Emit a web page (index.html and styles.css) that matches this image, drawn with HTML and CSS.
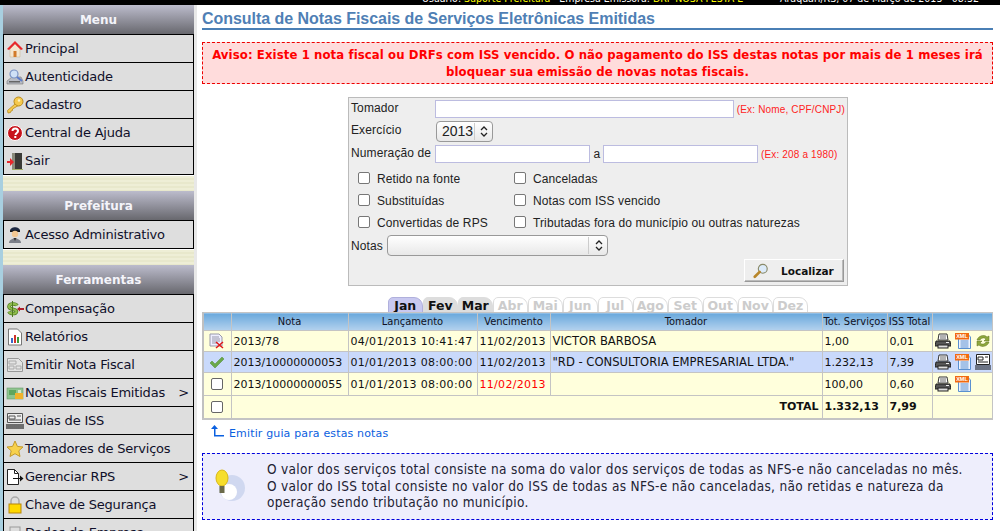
FILE: index.html
```html
<!DOCTYPE html>
<html lang="pt-BR">
<head>
<meta charset="utf-8">
<title>Consulta de Notas Fiscais</title>
<link rel="stylesheet" href="styles.css">
</head>
<body>
<header class="topbar">
  <span class="top-user">Usuário: <b>Suporte Prefeitura</b> &nbsp; Empresa Emissora: <b>DRF NOSA FESTA E</b></span>
  <span class="top-date">Araquari/RS, 07 de Março de 2013 - 08:32</span>
</header>
<div class="page">
<aside class="sidebar">
  <h2 class="side-head">Menu</h2>
  <ul class="side-list">
    <li><svg class="mi" viewBox="0 0 18 18"><path d="M4 9l5-5 5 5v8H4z" fill="#f4e6d0" stroke="#c9b088" stroke-width=".5"/><path d="M1 9 9 1l8 8-2 1-6-6-6 6z" fill="#e8282c"/><rect x="7.5" y="11" width="3" height="6" fill="#d27a2a"/></svg>Principal</li>
    <li><svg class="mi" viewBox="0 0 18 18"><path d="M1 13l5-4h9l2 4v3H1z" fill="#b9bcc4" stroke="#777" stroke-width=".6"/><rect x="3" y="13" width="11" height="1.5" fill="#666"/><circle cx="8" cy="6" r="4" fill="#cfe0f6" stroke="#7b93c4" stroke-width="1.2"/><path d="M11 9l5 4" stroke="#5d7cc8" stroke-width="2"/></svg>Autenticidade</li>
    <li><svg class="mi" viewBox="0 0 18 18"><circle cx="12.5" cy="5.5" r="4.5" fill="#f5c94e" stroke="#b98a1c"/><path d="M9 8 1.500 14.500l.5 2.500 2.500-.5.500-1.500 1.500-.5 0-1.500 5-3z" fill="#f5c94e" stroke="#b98a1c" stroke-width=".8"/><circle cx="13" cy="4.500" r="1.200" fill="#fff3c0"/></svg>Cadastro</li>
    <li><svg class="mi" viewBox="0 0 18 18"><circle cx="9" cy="9" r="7.500" fill="#c8141c" stroke="#fff"/><path d="M6.500 7c0-3.500 5.500-3.500 5.500 0 0 2-2.500 2-2.500 4" fill="none" stroke="#fff" stroke-width="2"/><rect x="8.300" y="12" width="2" height="2" fill="#fff"/></svg>Central de Ajuda</li>
    <li><svg class="mi" viewBox="0 0 18 18"><path d="M6 1h10v16H6z" fill="#3a3a36"/><path d="M6 1h3v16H6z" fill="#8a8a7a"/><path d="M6 17h11v.8H6z" fill="#8fa24a"/><path d="M1 9h3V6l4 4-4 4v-3H1z" fill="#e8282c"/></svg>Sair</li>
  </ul>
  <div class="side-gap"></div>
  <h2 class="side-head">Prefeitura</h2>
  <ul class="side-list">
    <li><svg class="mi" viewBox="0 0 18 18"><path d="M4 5c0-5 10-5 10 0z" fill="#1f2a44"/><rect x="4" y="4.500" width="10" height="1.500" fill="#111"/><circle cx="9" cy="8" r="3.200" fill="#f3c893"/><path d="M3 17c0-6 12-6 12 0z" fill="#7c7f88"/><path d="M7.500 12h3l-1.500 3z" fill="#333"/></svg>Acesso Administrativo</li>
  </ul>
  <div class="side-gap"></div>
  <h2 class="side-head">Ferramentas</h2>
  <ul class="side-list">
    <li><svg class="mi" viewBox="0 0 18 18"><path d="M11 5.500C10 3.500 3.500 3 3 6.500 2.500 10 10.500 8.500 10.500 11.500 10.500 14.500 4 14 3 11.500" fill="none" stroke="#4f7a20" stroke-width="3.600"/><path d="M11 5.500C10 3.500 3.500 3 3 6.500 2.500 10 10.500 8.500 10.500 11.500 10.500 14.500 4 14 3 11.500" fill="none" stroke="#8fbc4c" stroke-width="2.200"/><path d="M6.500 1v16" stroke="#4f7a20" stroke-width="1"/><path d="M11 9l3-2.500V8h4v2h-4v1.500z" fill="#b0202c"/></svg>Compensação</li>
    <li><svg class="mi" viewBox="0 0 18 18"><path d="M2.500 1h9l4 4v12h-13z" fill="#fff" stroke="#777"/><rect x="5" y="10" width="2" height="5" fill="#3a66c8"/><rect x="8" y="7" width="2" height="8" fill="#d0322c"/><rect x="11" y="9" width="2" height="6" fill="#3a9a3a"/></svg>Relatórios</li>
    <li><svg class="mi" viewBox="0 0 18 18"><path d="M1.500 2.500h11l4 4v9h-15z" fill="#e4e4e4" stroke="#999"/><path d="M3 5h7v3H3zM3 10h5v3H3zM10 10h5v3h-5z" fill="none" stroke="#aaa"/></svg>Emitir Nota Fiscal</li>
    <li><svg class="mi" viewBox="0 0 18 18"><rect x="1" y="4" width="16" height="11" fill="#8fc48f" stroke="#6a9a6a" stroke-width=".6"/><rect x="3" y="6" width="7" height="5" fill="#5ea65e"/><rect x="9" y="9" width="8" height="6" fill="#f0b32c"/><rect x="12" y="6" width="3" height="3" fill="#d8e8c8"/></svg>Notas Fiscais Emitidas<span class="chev">&gt;</span></li>
    <li><svg class="mi" viewBox="0 0 18 18"><path d="M1.500 1.500h15v9h-15z" fill="#eee" stroke="#555"/><path d="M3 4h6v3H3zM3 8h12M11 4h4" fill="none" stroke="#555"/><path d="M1 12v5M3 12v5M5 12v5M7 12v5M9 12v5M11 12v5M13 12v5M15 12v5M17 12v5" stroke="#111" stroke-width="1.100"/></svg>Guias de ISS</li>
    <li><svg class="mi" viewBox="0 0 18 18"><path d="M9 1l2.400 5.400 5.600.6-4.200 3.800 1.200 5.700L9 13.700 4 16.500l1.200-5.700L1 7l5.600-.6z" fill="#f7d14c" stroke="#c49a2a"/></svg>Tomadores de Serviços</li>
    <li><svg class="mi" viewBox="0 0 18 18"><path d="M1.500 1.500h7l4 4v11h-11z" fill="#fff" stroke="#222"/><path d="M8.500 1.500v4h4" fill="none" stroke="#222"/><path d="M7 10h7V7.500l3.500 3-3.500 3V11H7z" fill="#111"/></svg>Gerenciar RPS<span class="chev">&gt;</span></li>
    <li><svg class="mi" viewBox="0 0 18 18"><path d="M5 8V5a4 4 0 0 1 8 0v3" fill="none" stroke="#aaa" stroke-width="1.500"/><rect x="3" y="8" width="12" height="9" fill="#ffd800" stroke="#b8860b"/></svg>Chave de Segurança</li>
    <li><svg class="mi" viewBox="0 0 18 18"><rect x="4" y="3" width="10" height="13" fill="#ddd" stroke="#999"/></svg>Dados da Empresa</li>
  </ul>
</aside>
<main class="content">
  <h1 class="title">Consulta de Notas Fiscais de Serviços Eletrônicas Emitidas</h1>
  <div class="alert">Aviso: Existe 1 nota fiscal ou DRFs com ISS vencido. O não pagamento do ISS destas notas por mais de 1 meses irá bloquear sua emissão de novas notas fiscais.</div>
  <form class="filter">
    <div class="f-row f-tomador">
      <label class="f-label">Tomador</label>
      <input class="txt txt-long" type="text">
      <span class="hint">(Ex: Nome, CPF/CNPJ)</span>
    </div>
    <div class="f-row f-ano">
      <label class="f-label">Exercício</label>
      <span class="sel sel-ano">2013<svg class="updown" viewBox="0 0 8 12"><path d="M1 4.500 4 1.500 7 4.500M1 7.500l3 3 3-3" fill="none" stroke="#222" stroke-width="1.300"/></svg></span>
    </div>
    <div class="f-row f-num">
      <label class="f-label">Numeração de</label>
      <input class="txt txt-num" type="text">
      <span class="f-a">a</span>
      <input class="txt txt-num" type="text">
      <span class="hint">(Ex: 208 a 1980)</span>
    </div>
    <div class="checks">
      <label class="chk"><input type="checkbox">Retido na fonte</label>
      <label class="chk"><input type="checkbox">Canceladas</label>
      <label class="chk"><input type="checkbox">Substituídas</label>
      <label class="chk"><input type="checkbox">Notas com ISS vencido</label>
      <label class="chk"><input type="checkbox">Convertidas de RPS</label>
      <label class="chk"><input type="checkbox">Tributadas fora do município ou outras naturezas</label>
    </div>
    <div class="f-row f-notas">
      <label class="f-label-short">Notas</label>
      <span class="sel sel-notas"><svg class="updown" viewBox="0 0 8 12"><path d="M1 4.500 4 1.500 7 4.500M1 7.500l3 3 3-3" fill="none" stroke="#222" stroke-width="1.300"/></svg></span>
    </div>
    <div class="f-actions">
      <button class="btn" type="button"><svg class="btn-ico" viewBox="0 0 18 18"><circle cx="11" cy="6.500" r="5" fill="#dcebfa" stroke="#8a8a6a" stroke-width="1.300"/><path d="M7.500 10 2 15.500" stroke="#b8862a" stroke-width="3" stroke-linecap="round"/></svg><span>Localizar</span></button>
    </div>
  </form>
  <nav class="tabs">
    <span class="tab tab-on">Jan</span><span class="tab tab-has">Fev</span><span class="tab tab-has">Mar</span><span class="tab tab-off">Abr</span><span class="tab tab-off">Mai</span><span class="tab tab-off">Jun</span><span class="tab tab-off">Jul</span><span class="tab tab-off">Ago</span><span class="tab tab-off">Set</span><span class="tab tab-off">Out</span><span class="tab tab-off">Nov</span><span class="tab tab-off">Dez</span>
  </nav>
  <table class="grid">
    <colgroup><col class="c1"><col class="c2"><col class="c3"><col class="c4"><col class="c5"><col class="c6"><col class="c7"><col class="c8"></colgroup>
    <thead>
      <tr><th></th><th>Nota</th><th>Lançamento</th><th>Vencimento</th><th>Tomador</th><th>Tot. Serviços</th><th>ISS Total</th><th></th></tr>
    </thead>
    <tbody>
      <tr class="r1">
        <td class="ctr"><svg class="ri" viewBox="0 0 16 16"><path d="M1 1h9l3 3v9H1z" fill="#eef" stroke="#99a"/><path d="M3 4h7M3 6h8M3 8h8M3 10h6" stroke="#99a"/><path d="M7 9l7 6M14 9l-7 6" stroke="#e01818" stroke-width="1.500"/></svg></td>
        <td>2013/78</td><td class="dt">04/01/2013 10:41:47</td><td class="dt">11/02/2013</td><td class="big">VICTOR BARBOSA</td><td>1,00</td><td>0,01</td>
        <td class="acts"><svg class="ai" viewBox="0 0 16 16"><path d="M4 1h8l1 6H3z" fill="#fff" stroke="#333"/><path d="M5 3h6M5 5h6" stroke="#666"/><path d="M1 8h14l1 5H0z" fill="#555" stroke="#222"/><rect x="3" y="12" width="10" height="3" fill="#ddd" stroke="#222"/><rect x="11" y="9" width="3" height="1" fill="#eee"/></svg><svg class="ai" viewBox="0 0 16 16"><path d="M3.500 1h9l3 3v11.500h-12z" fill="#eef4ff" stroke="#5a90d0"/><path d="M5.500 8h8M5.500 10h8M5.500 12h8M5.500 14h8" stroke="#5a90d0"/><rect x="0" y="0" width="14" height="6.500" fill="#f26a10"/><text x="7" y="5.400" class="xmltag">XML</text></svg><svg class="ai" viewBox="0 0 16 16"><path d="M2 7c1-4 7-6 10-3l2-1v5h-5l2-2c-2-2-5-1-6 1z" fill="#8fa83c" stroke="#5c7020" stroke-width=".5"/><path d="M14 9c-1 4-7 6-10 3l-2 1V8h5L5 10c2 2 5 1 6-1z" fill="#8fa83c" stroke="#5c7020" stroke-width=".5"/></svg></td>
      </tr>
      <tr class="r2">
        <td class="ctr"><svg class="ri" viewBox="0 0 16 16"><path d="M1 9l2-2 3 3 7-7 2 2-9 9z" fill="#6aa84a" stroke="#4d8a34" stroke-width=".5"/></svg></td>
        <td>2013/10000000053</td><td class="dt">01/01/2013 08:00:00</td><td class="dt">11/02/2013</td><td class="big">"RD - CONSULTORIA EMPRESARIAL LTDA."</td><td>1.232,13</td><td>7,39</td>
        <td class="acts"><svg class="ai" viewBox="0 0 16 16"><path d="M4 1h8l1 6H3z" fill="#fff" stroke="#333"/><path d="M5 3h6M5 5h6" stroke="#666"/><path d="M1 8h14l1 5H0z" fill="#555" stroke="#222"/><rect x="3" y="12" width="10" height="3" fill="#ddd" stroke="#222"/><rect x="11" y="9" width="3" height="1" fill="#eee"/></svg><svg class="ai" viewBox="0 0 16 16"><path d="M3.500 1h9l3 3v11.500h-12z" fill="#eef4ff" stroke="#5a90d0"/><path d="M5.500 8h8M5.500 10h8M5.500 12h8M5.500 14h8" stroke="#5a90d0"/><rect x="0" y="0" width="14" height="6.500" fill="#f26a10"/><text x="7" y="5.400" class="xmltag">XML</text></svg><svg class="ai" viewBox="0 0 16 16"><path d="M1.500 .5h13v10h-13z" fill="#fff" stroke="#222"/><path d="M3 3h5v3H3zM10 3h3M3 8h10" fill="none" stroke="#222"/><path d="M1 11v5M3 11v5M5 11v5M7 11v5M9 11v5M11 11v5M13 11v5M15 11v5" stroke="#111"/></svg></td>
      </tr>
      <tr class="r3">
        <td class="ctr"><input class="rowchk" type="checkbox"></td>
        <td>2013/10000000055</td><td class="dt">01/01/2013 08:00:00</td><td class="dt late">11/02/2013</td><td></td><td>100,00</td><td>0,60</td>
        <td class="acts"><svg class="ai" viewBox="0 0 16 16"><path d="M4 1h8l1 6H3z" fill="#fff" stroke="#333"/><path d="M5 3h6M5 5h6" stroke="#666"/><path d="M1 8h14l1 5H0z" fill="#555" stroke="#222"/><rect x="3" y="12" width="10" height="3" fill="#ddd" stroke="#222"/><rect x="11" y="9" width="3" height="1" fill="#eee"/></svg><svg class="ai" viewBox="0 0 16 16"><path d="M3.500 1h9l3 3v11.500h-12z" fill="#eef4ff" stroke="#5a90d0"/><path d="M5.500 8h8M5.500 10h8M5.500 12h8M5.500 14h8" stroke="#5a90d0"/><rect x="0" y="0" width="14" height="6.500" fill="#f26a10"/><text x="7" y="5.400" class="xmltag">XML</text></svg></td>
      </tr>
      <tr class="r4">
        <td class="ctr"><input class="rowchk" type="checkbox"></td>
        <td colspan="4" class="tot-label">TOTAL</td><td class="strong">1.332,13</td><td class="strong">7,99</td><td></td>
      </tr>
    </tbody>
  </table>
  <a class="guia" href="#"><svg class="guia-ico" viewBox="0 0 14 12"><path d="M3.500 0 7 4H4.500v6H13v1.500H3V4H0z" fill="#0a60e0"/></svg>Emitir guia para estas notas</a>
  <div class="info">
    <svg class="bulb" viewBox="0 0 30 34"><circle cx="17" cy="19" r="13" fill="#d0d8f0"/><circle cx="14" cy="23" r="8" fill="#fff"/><ellipse cx="7" cy="9" rx="6" ry="8" fill="#f6de2c" stroke="#d8b81c"/><rect x="4.500" y="17" width="5" height="7" fill="#6a6a4a"/></svg>
    <p>O valor dos serviços total consiste na soma do valor dos serviços de todas as NFS-e não canceladas no mês.<br>O valor do ISS total consiste no valor do ISS de todas as NFS-e não canceladas, não retidas e natureza da operação sendo tributação no município.</p>
  </div>
</main>
</div>
</body>
</html>
```
FILE: styles.css
```css
* { box-sizing: border-box; }
html, body { margin: 0; height: 531px; overflow: hidden; }
body { background: #fff; font-family: "DejaVu Sans", sans-serif; color: #111; }

.topbar { height: 5px; background: #000; color: #fff; font: 10.500px/14px "DejaVu Sans Condensed", "DejaVu Sans", sans-serif; font-stretch: condensed; display: flex; align-items: flex-end; overflow: hidden; padding: 0 0 0 422px; }
.top-user b { color: #ff0; font-weight: normal; }
.top-user { flex: none; width: 358px; white-space: nowrap; overflow: hidden; }
.top-date { flex: none; white-space: nowrap; }

.page { display: flex; height: 526px; }
.sidebar { flex: none; width: 197px; border-left: 3px solid #a8cfe0; border-right: 3px solid #e8e8e8; overflow: hidden; }
.side-head { margin: 0; height: 29px; font: bold 12px/30px "DejaVu Sans", sans-serif; color: #f4f4fa; text-align: center; background: linear-gradient(#bcbccc, #68686e); }
.side-list { list-style: none; margin: 0; padding: 0; border: 1px solid #000; border-bottom: 0; }
.side-list li { height: 28px; border-bottom: 1px solid #000; background: #dedede; display: flex; align-items: center; padding-left: 2px; font-size: 13px; letter-spacing: -.2px; color: #10102a; white-space: nowrap; }
.mi { width: 18px; height: 18px; flex: none; margin-right: 1px; }
.chev { margin-left: auto; padding-right: 4px; }
.side-gap { height: 16px; padding: 1px 0; background: repeating-linear-gradient(#eeeed6 0 2px, #e8e8cc 2px 4px); border-top: 1px solid #fff; }

.content { flex: none; width: 800px; padding: 0 4px 0 5px; }
.title { margin: 0 0 12px; height: 25px; font: bold 16px/27px "Liberation Sans", sans-serif; letter-spacing: -.04px; color: #4f7fb5; border-bottom: 2px solid #4a7fb5; white-space: nowrap; }
.alert { height: 42px; padding: 4px 4px; border: 1px dashed #e00; background: #ffdcdc; color: #f00; font: bold 13px/16.5px "DejaVu Sans Condensed", "DejaVu Sans", sans-serif; font-stretch: condensed; letter-spacing: .1px; text-align: center; }
.filter { width: 500px; height: 189px; margin: 13px 0 0 146px; padding: 2px 2px 0 2px; background: #eee; border: 1px solid #bbb; font: 12px "Liberation Sans", sans-serif; letter-spacing: .12px; color: #222; }
.f-row { display: flex; align-items: center; }
.f-tomador { height: 18px; }
.f-ano { height: 22px; margin-top: 2px; }
.f-num { height: 18px; margin-top: 3px; }
.f-label { width: 84px; flex: none; white-space: nowrap; margin-bottom: 2px; }
.f-label-short { flex: none; width: 36px; }
.txt { height: 18px; border: 1px solid #bcbce0; background: #fff; padding: 0; margin: 0; }
.txt-long { width: 300px; }
.txt-num { width: 155px; }
.f-a { width: 13px; text-align: center; padding-left: 1px; }
.hint { font-size: 10px; letter-spacing: .16px; color: #f22; margin-left: 3px; white-space: nowrap; }
.sel { position: relative; display: block; background: linear-gradient(#fff, #e8e8e8); border: 1px solid #999; border-radius: 4px; font-size: 14px; letter-spacing: 0; height: 21px; line-height: 19px; padding-left: 5px; }
.sel-ano { width: 57px; margin-left: 1px; }
.sel-notas { width: 221px; }
.updown { position: absolute; right: 4px; top: 3px; width: 8px; height: 13px; }
.sel::after { content: ""; position: absolute; right: 17px; top: 1px; bottom: 1px; border-left: 1px solid #ccc; }
.sel-notas::after { right: 18px; }
.checks { display: grid; grid-template-columns: 156px 1fr; margin: 5px 0 0 7px; }
.chk { height: 22px; display: flex; align-items: center; white-space: nowrap; }
.chk input { appearance: none; width: 12px; height: 12px; margin: -3px 7px 0 0; border: 1px solid #777; border-radius: 2px; background: #fff; flex: none; }
.f-notas { height: 21px; margin-top: 1px; }
.f-actions { display: flex; justify-content: flex-end; padding-right: 1px; margin-top: 3px; }
.btn { width: 100px; height: 23px; padding: 0 0 0 8px; display: flex; align-items: center; background: #eee; border: 1px solid; border-color: #fff #999 #999 #fff; box-shadow: inset -1px -1px 0 #bbb; font: bold 10.500px "DejaVu Sans", sans-serif; color: #111; }
.btn-ico { width: 16px; height: 16px; flex: none; margin-right: 12px; }

.tabs { display: flex; height: 15px; margin: 11px 0 0 186px; overflow: hidden; }
.tab { flex: none; width: 34.500px; margin-right: .5px; height: 16px; font: bold 12.500px/15px "DejaVu Sans", sans-serif; text-align: center; border: 1px solid transparent; border-radius: 5px 9px 0 0; }
.tab-on { background: #c8c8f0; border-color: #b0b0dc; color: #111; }
.tab-has { background: #ddd; border-color: #ddd; color: #111; }
.tab-off { background: #fff; border-color: #ddd; color: #ccc; }

.grid { border-collapse: collapse; table-layout: fixed; width: 789px; font-size: 11px; border-bottom: 2px solid #c4c4c4; border-left: 2px solid #c0c0c0; }
.c1 { width: 28px; } .c2 { width: 117px; } .c3 { width: 129px; } .c4 { width: 73px; } .c5 { width: 272px; } .c6 { width: 65px; } .c7 { width: 45px; } .c8 { width: 60px; }
.grid th { height: 18px; padding: 0; font: 11px/16px "DejaVu Sans Condensed", "DejaVu Sans", sans-serif; font-stretch: condensed; color: #112; background: linear-gradient(#69a8dc, #b4d2ee); border: 1px solid #c4c4c4; white-space: nowrap; }
.grid td { padding: 0 0 0 2px; border: 1px solid #c4c4c4; white-space: nowrap; overflow: hidden; }
.r1 td, .r3 td, .r4 td { background: #ffffdc; }
.r2 td { background: #c9d9fb; }
.r1 td { height: 21px; } .r2 td { height: 21px; } .r3 td { height: 23px; } .r4 td { height: 23px; }
.grid td.big { font-size: 11.600px; }
.grid td.dt { letter-spacing: .3px; }
.grid td.ctr { padding: 0; text-align: center; line-height: 0; }
.ri { width: 16px; height: 16px; }
.rowchk { appearance: none; width: 12px; height: 12px; margin: 0; border: 1px solid #666; border-radius: 2px; background: #fff; vertical-align: middle; }
.late { color: #f00; }
.strong { font-weight: bold; }
.grid td.tot-label { text-align: right; font-weight: bold; padding-right: 3px; }
.grid td.acts { line-height: 0; padding-left: 2px; }
.ai { width: 16px; height: 16px; margin-right: 4px; }
.xmltag { font: bold 5.500px "Liberation Sans", sans-serif; fill: #fff; text-anchor: middle; }

.guia { display: flex; align-items: flex-end; margin: 5px 0 0 9px; font-size: 11px; letter-spacing: .15px; color: #0a60e0; text-decoration: none; height: 15px; }
.guia-ico { width: 14px; height: 12px; margin: 0 4px 3px 0; flex: none; }
.info { display: flex; align-items: center; height: 67px; margin-top: 13px; border: 1px dashed #00d; background: #eeeefc; font: 13.500px/16.500px "DejaVu Sans Condensed", "DejaVu Sans", sans-serif; font-stretch: condensed; letter-spacing: .33px; color: #223; }
.bulb { width: 30px; height: 34px; margin: 0 22px 0 12px; flex: none; }
.info p { margin: 0; width: 705px; }
```
